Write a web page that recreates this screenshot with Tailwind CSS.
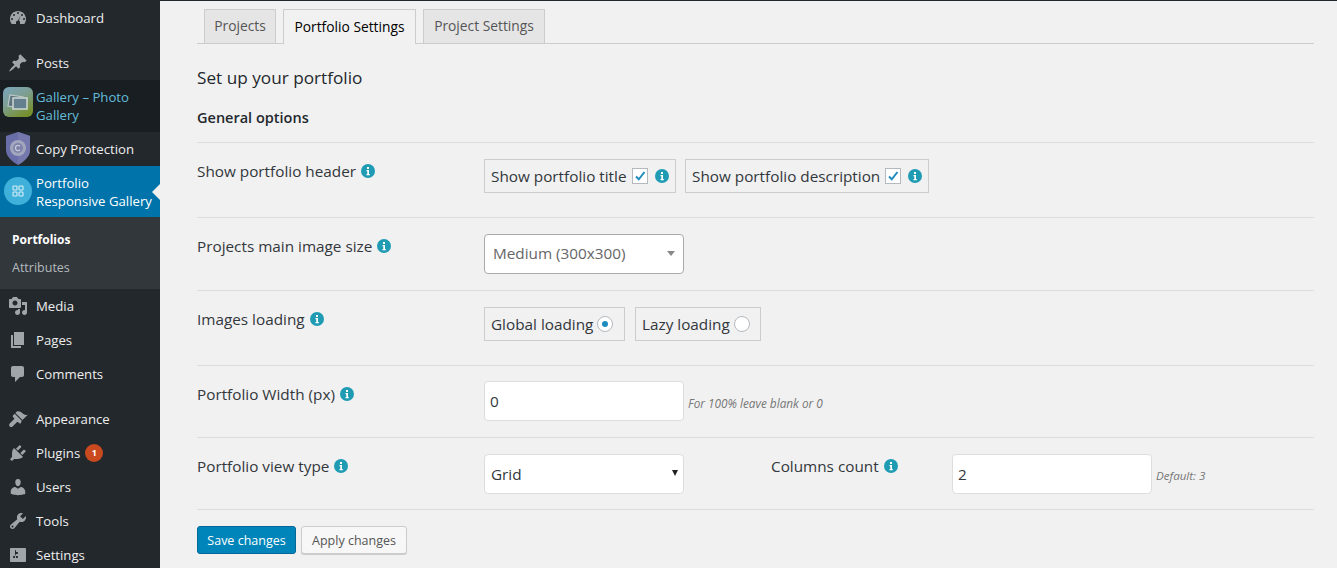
<!DOCTYPE html>
<html><head><meta charset="utf-8"><script src="https://cdn.jsdelivr.net/npm/@tailwindcss/browser@4"></script></head>
<body class="m-0 overflow-hidden">
<div class="flex h-[568px] w-[1337px] overflow-hidden bg-[#f1f1f1] font-['Open_Sans',sans-serif] text-[15.3px] text-[#32373c]">
<aside class="w-[160px] shrink-0 bg-[#23282d] text-[13.2px] text-[#eeeeee] leading-[18px] overflow-hidden">
 <div class="h-[1px]"></div>
 <a class="flex h-[34px] items-center pl-[36px] relative"><svg class="absolute left-[8px] top-[7px] w-[20px] h-[20px] fill-[#a0a5aa]" viewBox="0 0 20 20"><path fill-rule="evenodd" d="M3.76 16h12.48c1.1-1.37 1.76-3.11 1.76-5 0-4.42-3.58-8-8-8s-8 3.58-8 8c0 1.89.66 3.63 1.76 5zM10 4a1 1 0 110 2 1 1 0 010-2zM6 6a1 1 0 110 2 1 1 0 010-2zm8 0a1 1 0 110 2 1 1 0 010-2zM4 10a1 1 0 110 2 1 1 0 010-2zm12 0a1 1 0 110 2 1 1 0 010-2zm-3.5-2.5l-1.6 5.1c.6.4 1.1 1 1.1 1.9v1.5H8v-1.5c0-1.1.9-2 2-2l2.500-5z"/></svg>Dashboard</a>
 <div class="h-[11px]"></div>
 <a class="flex h-[34px] items-center pl-[36px] relative"><svg class="absolute left-[8px] top-[7px] w-[20px] h-[20px] fill-[#a0a5aa]" viewBox="0 0 20 20"><path d="M10.44 3.02l1.82-1.82 6.36 6.35-1.83 1.82c-1.05-.68-2.48-.57-3.41.36l-.75.75c-.92.93-1.04 2.35-.35 3.41l-1.83 1.82-2.41-2.41-2.8 2.79c-.42.42-3.38 2.71-3.8 2.29s1.86-3.39 2.28-3.81l2.79-2.79L4.1 9.36l1.83-1.82c1.05.69 2.48.57 3.41-.36l.75-.75c.93-.92 1.04-2.35.35-3.41z"/></svg>Posts</a>
 <a class="flex h-[52px] items-center pl-[36px] bg-[#191e23] text-[#63bcd8] relative"><svg class="absolute left-[3px] top-[7px] w-[30px] h-[30px]" viewBox="0 0 30 30"><defs><linearGradient id="g" x1="0" y1="0" x2="0.6" y2="1"><stop offset="0" stop-color="#7ba6bd"/><stop offset=".5" stop-color="#7d9f92"/><stop offset="1" stop-color="#77902f"/></linearGradient></defs><rect width="30" height="30" rx="6" fill="url(#g)"/><path d="M5 19L7 8l13 2-2 11z" fill="#5d7480" stroke="#bcc9c6" stroke-width="1.200"/><path d="M10 11h14v11H10z" fill="#64808f" stroke="#cfd8d4" stroke-width="1.500"/></svg><span>Gallery – Photo Gallery</span></a>
 <a class="flex h-[34px] items-center pl-[36px] relative"><svg class="absolute left-[5px] top-0 w-[26px] h-[33px]" viewBox="0 0 26 33"><path d="M13 0l12 4v14c0 7-7 12-12 15C8 30 1 25 1 18V4z" fill="#6a6ea8"/><path d="M13 0l12 4v14c0 7-7 12-12 15z" fill="#7478ad"/><circle cx="13" cy="16" r="8" fill="#a3a7bd"/><circle cx="13" cy="16" r="5" fill="#7f83ab"/><path d="M15 14.300a2.600 2.600 0 100 3.400" fill="none" stroke="#c4c7d6" stroke-width="1.400"/></svg>Copy Protection</a>
 <a class="flex h-[51px] items-center pl-[36px] bg-[#0073aa] text-white relative"><svg class="absolute left-[4px] top-[11px] w-[28px] h-[28px]" viewBox="0 0 28 28"><circle cx="14" cy="14" r="14" fill="#3fb0d9"/><g fill="none" stroke="#d9f0f7" stroke-width="1.100"><rect x="9" y="9" width="4" height="4" rx=".8"/><rect x="15" y="9" width="4" height="4" rx=".8"/><rect x="9" y="15" width="4" height="4" rx=".8"/><rect x="15" y="15" width="4" height="4" rx=".8"/></g></svg><span class="whitespace-nowrap">Portfolio<br>Responsive Gallery</span><span class="absolute right-0 top-[18px] border-y-[8px] border-r-[8px] border-y-transparent border-r-[#f1f1f1]"></span></a>
 <div class="h-[72px] bg-[#32373c] pl-[12px] pt-[14px] text-[12.500px] text-[#b4b9be]"><div class="h-[28px] text-[12px] font-bold text-white">Portfolios</div><div>Attributes</div></div>
 <a class="flex h-[34px] items-center pl-[36px] relative"><svg class="absolute left-[8px] top-[7px] w-[20px] h-[20px] fill-[#a0a5aa]" viewBox="0 0 20 20"><path d="M13 11V4c0-.55-.45-1-1-1h-1.670L9 1H5L3.670 3H2c-.55 0-1 .45-1 1v7c0 .55.45 1 1 1h10c.55 0 1-.45 1-1zM7 4.500c1.380 0 2.500 1.120 2.500 2.500S8.380 9.500 7 9.500 4.500 8.380 4.500 7 5.620 4.500 7 4.500zM14 6h5v10.500c0 1.380-1.120 2.500-2.500 2.500S14 17.880 14 16.500s1.120-2.500 2.500-2.500c.17 0 .34.02.5.05V9h-3V6zm-4 8.050V13h2v3.500c0 1.380-1.120 2.500-2.500 2.500S7 17.880 7 16.500 8.120 14 9.500 14c.17 0 .34.02.5.05z"/></svg>Media</a>
 <a class="flex h-[34px] items-center pl-[36px] relative"><svg class="absolute left-[8px] top-[7px] w-[20px] h-[20px] fill-[#a0a5aa]" viewBox="0 0 20 20"><path d="M6 15V2h10v13H6zm-1 1h8v2H3V5h2v11z"/></svg>Pages</a>
 <a class="flex h-[34px] items-center pl-[36px] relative"><svg class="absolute left-[8px] top-[7px] w-[20px] h-[20px] fill-[#a0a5aa]" viewBox="0 0 20 20"><path d="M5 2h9c1.100 0 2 .9 2 2v7c0 1.100-.9 2-2 2h-2l-5 5v-5H5c-1.100 0-2-.9-2-2V4c0-1.100.9-2 2-2z"/></svg>Comments</a>
 <div class="h-[11px]"></div>
 <a class="flex h-[34px] items-center pl-[36px] relative"><svg class="absolute left-[8px] top-[7px] w-[20px] h-[20px] fill-[#a0a5aa]" viewBox="0 0 20 20"><path d="M14.480 11.060L7.410 3.990l1.500-1.500c.5-.56 2.300-.47 3.510.32 1.210.8 1.430 1.280 2.910 2.100 1.180.64 2.450 1.260 4.450.85zm-.71.71L6.700 4.700 4.930 6.470c-.39.39-.39 1.020 0 1.410l1.060 1.060c.39.39.39 1.030 0 1.420l-4.240 4.240c-.78.78-.78 2.050 0 2.830.78.78 2.050.78 2.830 0l4.240-4.240c.39-.39 1.030-.39 1.420 0l1.060 1.060c.39.39 1.020.39 1.410 0z"/></svg>Appearance</a>
 <a class="flex h-[34px] items-center pl-[36px] relative"><svg class="absolute left-[8px] top-[7px] w-[20px] h-[20px] fill-[#a0a5aa]" viewBox="0 0 20 20"><path d="M13.110 4.360L9.870 7.600 8 5.730l3.240-3.240c.35-.34 1.050-.2 1.560.32.52.51.66 1.210.31 1.550zm-8 1.770l.91-1.120 9.010 9.010-1.190.84c-.71.71-2.630 1.160-3.820 1.160H6.140L4.900 17.260c-.59.59-1.540.59-2.120 0-.59-.58-.59-1.530 0-2.120l1.240-1.240v-3.880c0-1.130.4-3.190 1.090-3.890zm7.260 3.970l3.240-3.240c.34-.35 1.040-.21 1.550.31.52.51.66 1.210.31 1.550l-3.240 3.250z"/></svg>Plugins<span class="ml-[5px] flex h-[18px] w-[18px] items-center justify-center rounded-full bg-[#ca4a1f] text-[9px] font-bold text-white">1</span></a>
 <a class="flex h-[34px] items-center pl-[36px] relative"><svg class="absolute left-[8px] top-[7px] w-[20px] h-[20px] fill-[#a0a5aa]" viewBox="0 0 20 20"><path d="M10 9.250c-2.270 0-2.730-3.440-2.730-3.440C7 4.020 7.820 2 9.970 2c2.160 0 2.980 2.020 2.710 3.810 0 0-.41 3.440-2.680 3.440zm0 2.570L12.720 10c2.390 0 4.520 2.330 4.520 4.530v2.490s-3.650 1.130-7.240 1.130c-3.650 0-7.240-1.130-7.240-1.130v-2.490c0-2.250 1.940-4.480 4.470-4.480z"/></svg>Users</a>
 <a class="flex h-[34px] items-center pl-[36px] relative"><svg class="absolute left-[8px] top-[7px] w-[20px] h-[20px] fill-[#a0a5aa]" viewBox="0 0 20 20"><path d="M16.680 9.770c-1.340 1.340-3.300 1.670-4.950.99l-5.410 6.520c-.99.99-2.590.99-3.580 0s-.99-2.590 0-3.570l6.520-5.420c-.68-1.650-.35-3.610.99-4.950 1.280-1.280 3.120-1.620 4.720-1.060l-2.890 2.890 2.820 2.820 2.860-2.870c.53 1.580.18 3.390-1.080 4.650zM3.810 16.210c.4.39 1.040.39 1.430 0 .4-.4.4-1.040 0-1.430-.39-.4-1.030-.4-1.430 0-.39.39-.39 1.030 0 1.430z"/></svg>Tools</a>
 <a class="flex h-[34px] items-center pl-[36px] relative"><svg class="absolute left-[8px] top-[7px] w-[20px] h-[20px] fill-[#a0a5aa]" viewBox="0 0 20 20"><path d="M18 16V4c0-.55-.45-1-1-1H3c-.55 0-1 .45-1 1v12c0 .55.45 1 1 1h14c.55 0 1-.45 1-1zM8 11h1c.55 0 1 .45 1 1s-.45 1-1 1H8v1.500c0 .28-.22.5-.5.5s-.5-.22-.5-.5V13H6c-.55 0-1-.45-1-1s.45-1 1-1h1V5.500c0-.28.22-.5.5-.5s.5.22.5.5V7h1c.55 0 1 .45 1 1s-.45 1-1 1h-1v5.500c0 .28-.22.5-.5.5s-.5-.22-.5-.5V9z"/></svg>Settings</a>
</aside>
<main class="flex-1 border-t border-[#23282d] pl-[37px] pr-[23px]">
 <nav class="flex h-[43px] items-end gap-[7px] border-b border-[#ccc] pl-[7px]">
  <a class="flex h-[34px] w-[72px] items-center justify-center border border-b-0 border-[#ccc] bg-[#e5e5e5] font-medium text-[13.800px] text-[#555]">Projects</a>
  <a class="relative top-px flex h-[35px] w-[133px] items-center justify-center border border-b-0 border-[#ccc] bg-[#f1f1f1] font-medium text-[13.800px] text-black">Portfolio Settings</a>
  <a class="flex h-[34px] w-[122px] items-center justify-center border border-b-0 border-[#ccc] bg-[#e5e5e5] font-medium text-[13.800px] text-[#555]">Project Settings</a>
 </nav>
 <h2 class="mt-[21px] text-[17.200px] leading-[26px] text-[#23282d]">Set up your portfolio</h2>
 <h3 class="mt-[17px] h-[34px] text-[14.500px] leading-[20px] font-semibold text-[#23282d]">General options</h3>

 <section class="flex h-[75px] border-t border-[#ddd] pt-[16px]">
  <div class="flex h-[24px] w-[287px] items-center gap-[5px]">Show portfolio header<svg class="h-[14px] w-[14px]" viewBox="0 0 14 14"><circle cx="7" cy="7" r="7" fill="#1f9cb4"/><path d="M6 3h2v2H6zM5.500 6H8v4h.8v1.200H5.500V10h.8V7.200h-.8z" fill="#fff"/></svg></div>
  <div class="flex gap-[9px]">
   <div class="flex h-[34px] w-[192px] items-center border border-[#ccc] pl-[6px]">Show portfolio title<span class="ml-[5px] flex h-[16px] w-[16px] items-center justify-center border border-[#b4b9be] bg-white"><svg class="h-[12px] w-[12px]" viewBox="0 0 12 12"><path d="M2 6.500l2.800 2.800L10.500 2" fill="none" stroke="#1e8cbe" stroke-width="2"/></svg></span><svg class="ml-[7px] h-[14px] w-[14px]" viewBox="0 0 14 14"><circle cx="7" cy="7" r="7" fill="#1f9cb4"/><path d="M6 3h2v2H6zM5.500 6H8v4h.8v1.200H5.500V10h.8V7.200h-.8z" fill="#fff"/></svg></div>
   <div class="flex h-[34px] w-[244px] items-center border border-[#ccc] pl-[6px]">Show portfolio description<span class="ml-[5px] flex h-[16px] w-[16px] items-center justify-center border border-[#b4b9be] bg-white"><svg class="h-[12px] w-[12px]" viewBox="0 0 12 12"><path d="M2 6.500l2.800 2.800L10.500 2" fill="none" stroke="#1e8cbe" stroke-width="2"/></svg></span><svg class="ml-[7px] h-[14px] w-[14px]" viewBox="0 0 14 14"><circle cx="7" cy="7" r="7" fill="#1f9cb4"/><path d="M6 3h2v2H6zM5.500 6H8v4h.8v1.200H5.500V10h.8V7.200h-.8z" fill="#fff"/></svg></div>
  </div>
 </section>

 <section class="flex h-[73px] border-t border-[#ddd] pt-[16px]">
  <div class="flex h-[24px] w-[287px] items-center gap-[5px]">Projects main image size<svg class="h-[14px] w-[14px]" viewBox="0 0 14 14"><circle cx="7" cy="7" r="7" fill="#1f9cb4"/><path d="M6 3h2v2H6zM5.500 6H8v4h.8v1.200H5.500V10h.8V7.200h-.8z" fill="#fff"/></svg></div>
  <div class="flex h-[40px] w-[200px] items-center justify-between rounded-[4px] border border-[#aaa] bg-white pb-[2px] pl-[8px] pr-[8px] text-[#666]">Medium (300x300)<span class="border-x-[4px] border-t-[5px] border-x-transparent border-t-[#888]"></span></div>
 </section>

 <section class="flex h-[75px] border-t border-[#ddd] pt-[16px]">
  <div class="flex h-[24px] w-[287px] items-center gap-[5px]">Images loading<svg class="h-[14px] w-[14px]" viewBox="0 0 14 14"><circle cx="7" cy="7" r="7" fill="#1f9cb4"/><path d="M6 3h2v2H6zM5.500 6H8v4h.8v1.200H5.500V10h.8V7.200h-.8z" fill="#fff"/></svg></div>
  <div class="flex gap-[10px]">
   <div class="flex h-[34px] w-[141px] items-center border border-[#ccc] pl-[6px]">Global loading<span class="ml-[4px] flex h-[16px] w-[16px] items-center justify-center rounded-full border border-[#b4b9be] bg-white"><span class="h-[6px] w-[6px] rounded-full bg-[#1e8cbe]"></span></span></div>
   <div class="flex h-[34px] w-[126px] items-center border border-[#ccc] pl-[6px]">Lazy loading<span class="ml-[4px] h-[16px] w-[16px] rounded-full border border-[#b4b9be] bg-white"></span></div>
  </div>
 </section>

 <section class="flex h-[72px] border-t border-[#ddd] pt-[15px]">
  <div class="flex h-[26px] w-[287px] items-center gap-[5px]">Portfolio Width (px)<svg class="h-[14px] w-[14px]" viewBox="0 0 14 14"><circle cx="7" cy="7" r="7" fill="#1f9cb4"/><path d="M6 3h2v2H6zM5.500 6H8v4h.8v1.200H5.500V10h.8V7.200h-.8z" fill="#fff"/></svg></div>
  <input value="0" class="h-[40px] w-[200px] rounded-[4px] border border-[#ddd] bg-white pl-[5px] text-[#32373c] outline-none">
  <i class="ml-[4px] mt-[14px] text-[11.800px] leading-[16px] text-[#777]">For 100% leave blank or 0</i>
 </section>

 <section class="flex h-[72px] border-t border-[#ddd] pt-[16px]">
  <div class="flex h-[24px] w-[287px] items-center gap-[5px]">Portfolio view type<svg class="h-[14px] w-[14px]" viewBox="0 0 14 14"><circle cx="7" cy="7" r="7" fill="#1f9cb4"/><path d="M6 3h2v2H6zM5.500 6H8v4h.8v1.200H5.500V10h.8V7.200h-.8z" fill="#fff"/></svg></div>
  <div class="flex h-[40px] w-[200px] items-center justify-between rounded-[4px] border border-[#ddd] bg-white pl-[6px] pr-[5px]">Grid<span class="mb-[3px] border-x-[3.500px] border-t-[6px] border-x-transparent border-t-[#222]"></span></div>
  <div class="ml-[87px] flex h-[24px] w-[181px] items-center gap-[5px]">Columns count<svg class="h-[14px] w-[14px]" viewBox="0 0 14 14"><circle cx="7" cy="7" r="7" fill="#1f9cb4"/><path d="M6 3h2v2H6zM5.500 6H8v4h.8v1.200H5.500V10h.8V7.200h-.8z" fill="#fff"/></svg></div>
  <input value="2" class="h-[40px] w-[200px] rounded-[4px] border border-[#ddd] bg-white pl-[5px] text-[#32373c] outline-none">
  <i class="ml-[4px] mt-[14px] text-[11.600px] leading-[16px] text-[#777]">Default: 3</i>
 </section>

 <div class="flex gap-[5px] border-t border-[#ddd] pt-[16px]">
  <button class="h-[28px] w-[99px] rounded-[3px] border border-[#006799] bg-[#0085ba] pt-[2px] text-[12.500px] text-white">Save changes</button>
  <button class="h-[28px] w-[106px] rounded-[3px] border border-[#ccc] bg-[#f7f7f7] pt-[2px] text-[12.500px] text-[#555] shadow-[0_1px_0_#ccc]">Apply changes</button>
 </div>
</main>
</div>
</body></html>
